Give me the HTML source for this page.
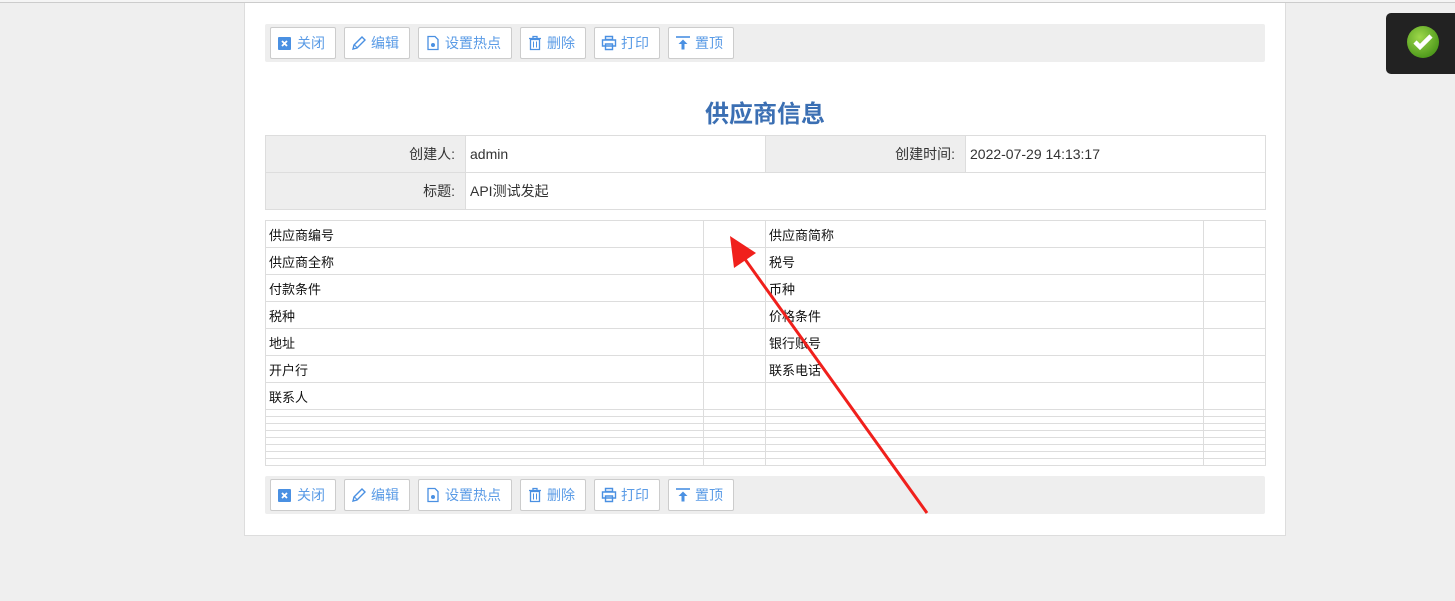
<!DOCTYPE html>
<html><head><meta charset="utf-8"><style>
*{margin:0;padding:0;box-sizing:border-box}
body{width:1455px;height:601px;background:#efefef;position:relative;overflow:hidden;font-family:"Liberation Sans","Noto Sans CJK SC",sans-serif}
.topline{position:absolute;left:0;top:0;width:1455px;height:3px;background:#f5f5f5;border-bottom:1px solid #ccc}
.panel{position:absolute;left:244px;top:3px;width:1042px;height:533px;background:#fff;border:1px solid #ddd;border-top:none}
.bar{position:absolute;left:265px;width:1000px;height:38px;background:#eee;border-radius:2px}
.btn{position:absolute;top:3px;height:32px;background:#fff;border:1px solid #ccc;border-radius:2px;color:#5a9be6;font-size:14px;line-height:30px;padding-left:26px}
.btn svg{position:absolute;left:6px;top:7px}
.title{position:absolute;left:244px;width:1042px;top:94px;text-align:center;font-size:24px;font-weight:bold;color:#3b6fb3}
table{border-collapse:collapse;position:absolute;left:265px;table-layout:fixed}
td{border:1px solid #ddd;padding:0 4px}
.info td{height:37px;font-size:14px;color:#333;padding:0 4px}
.info td.l{background:#eee;text-align:right;padding-right:10px}
.det td{font-size:13px;color:#111;height:27px;padding:0 3px}
.det tr.t td{height:7px;padding:0}
.toast{position:absolute;left:1386px;top:13px;width:75px;height:61px;background:#222;border-radius:5px}
</style></head><body>
<div class="topline"></div>
<div class="panel"></div>

<div class="bar" style="top:24px">
 <div class="btn" style="left:5px;width:66px"><svg width="16" height="16"><rect x="1" y="2" width="13" height="13" rx="1" fill="#4a90e2"/><path d="M5 6l5 5M10 6l-5 5" stroke="#fff" stroke-width="1.8"/></svg>关闭</div>
 <div class="btn" style="left:79px;width:66px"><svg width="16" height="16"><path d="M2 14l1-4 8-8 3 3-8 8z" fill="none" stroke="#4a90e2" stroke-width="1.4"/><path d="M3.5 10l2.5 2.5" stroke="#4a90e2"/></svg>编辑</div>
 <div class="btn" style="left:153px;width:94px"><svg width="16" height="16"><path d="M3 1.5h7l3 3v10H3z" fill="none" stroke="#4a90e2" stroke-width="1.3"/><circle cx="8" cy="10" r="2" fill="#4a90e2"/></svg>设置热点</div>
 <div class="btn" style="left:255px;width:66px"><svg width="16" height="16"><path d="M2 3.5h12M6 3.5V1.5h4v2M3.5 4.5h9v10h-9z" fill="none" stroke="#4a90e2" stroke-width="1.3"/><path d="M6.5 6.5v6M9.5 6.5v6" stroke="#4a90e2"/></svg>删除</div>
 <div class="btn" style="left:329px;width:66px"><svg width="16" height="16"><path d="M4.5 1.5h7v3h-7zM1.5 5h13v6h-13zM4.5 9h7v5.5h-7z" fill="#fff" stroke="#4a90e2" stroke-width="1.4"/></svg>打印</div>
 <div class="btn" style="left:403px;width:66px"><svg width="16" height="16"><path d="M1 2h14" stroke="#4a90e2" stroke-width="1.6"/><path d="M8 4.5l-4.5 4.5h3v5.5h3V9h3z" fill="#4a90e2"/></svg>置顶</div>
</div>

<div class="title">供应商信息</div>

<table class="info" style="top:135px;width:1000px">
<col style="width:200px"><col style="width:300px"><col style="width:200px"><col style="width:300px">
<tr><td class="l">创建人:</td><td>admin</td><td class="l">创建时间:</td><td>2022-07-29 14:13:17</td></tr>
<tr><td class="l">标题:</td><td colspan="3">API测试发起</td></tr>
</table>

<table class="det" style="top:220px;width:1000px">
<col style="width:438px"><col style="width:62px"><col style="width:438px"><col style="width:62px">
<tr><td>供应商编号</td><td></td><td>供应商简称</td><td></td></tr>
<tr><td>供应商全称</td><td></td><td>税号</td><td></td></tr>
<tr><td>付款条件</td><td></td><td>币种</td><td></td></tr>
<tr><td>税种</td><td></td><td>价格条件</td><td></td></tr>
<tr><td>地址</td><td></td><td>银行账号</td><td></td></tr>
<tr><td>开户行</td><td></td><td>联系电话</td><td></td></tr>
<tr><td>联系人</td><td></td><td></td><td></td></tr>
<tr class="t"><td></td><td></td><td></td><td></td></tr>
<tr class="t"><td></td><td></td><td></td><td></td></tr>
<tr class="t"><td></td><td></td><td></td><td></td></tr>
<tr class="t"><td></td><td></td><td></td><td></td></tr>
<tr class="t"><td></td><td></td><td></td><td></td></tr>
<tr class="t"><td></td><td></td><td></td><td></td></tr>
<tr class="t"><td></td><td></td><td></td><td></td></tr>
<tr class="t"><td></td><td></td><td></td><td></td></tr>
</table>

<div class="bar" style="top:476px">
 <div class="btn" style="left:5px;width:66px"><svg width="16" height="16"><rect x="1" y="2" width="13" height="13" rx="1" fill="#4a90e2"/><path d="M5 6l5 5M10 6l-5 5" stroke="#fff" stroke-width="1.8"/></svg>关闭</div>
 <div class="btn" style="left:79px;width:66px"><svg width="16" height="16"><path d="M2 14l1-4 8-8 3 3-8 8z" fill="none" stroke="#4a90e2" stroke-width="1.4"/><path d="M3.5 10l2.5 2.5" stroke="#4a90e2"/></svg>编辑</div>
 <div class="btn" style="left:153px;width:94px"><svg width="16" height="16"><path d="M3 1.5h7l3 3v10H3z" fill="none" stroke="#4a90e2" stroke-width="1.3"/><circle cx="8" cy="10" r="2" fill="#4a90e2"/></svg>设置热点</div>
 <div class="btn" style="left:255px;width:66px"><svg width="16" height="16"><path d="M2 3.5h12M6 3.5V1.5h4v2M3.5 4.5h9v10h-9z" fill="none" stroke="#4a90e2" stroke-width="1.3"/><path d="M6.5 6.5v6M9.5 6.5v6" stroke="#4a90e2"/></svg>删除</div>
 <div class="btn" style="left:329px;width:66px"><svg width="16" height="16"><path d="M4.5 1.5h7v3h-7zM1.5 5h13v6h-13zM4.5 9h7v5.5h-7z" fill="#fff" stroke="#4a90e2" stroke-width="1.4"/></svg>打印</div>
 <div class="btn" style="left:403px;width:66px"><svg width="16" height="16"><path d="M1 2h14" stroke="#4a90e2" stroke-width="1.6"/><path d="M8 4.5l-4.5 4.5h3v5.5h3V9h3z" fill="#4a90e2"/></svg>置顶</div>
</div>

<svg style="position:absolute;left:0;top:0" width="1455" height="601">
 <path d="M927 513L742 255" stroke="#f0201c" stroke-width="3"/>
 <path d="M730 236L734 268L756 253z" fill="#f0201c"/>
</svg>

<div class="toast">
 <svg style="position:absolute;left:20px;top:12px" width="34" height="34"><defs><radialGradient id="g" cx="40%" cy="35%" r="65%"><stop offset="0" stop-color="#9ed84a"/><stop offset="1" stop-color="#4f9a1c"/></radialGradient></defs><circle cx="17" cy="17" r="16" fill="url(#g)"/><path d="M9 17l5 5 11-11" fill="none" stroke="#fff" stroke-width="4.5"/></svg>
</div>
</body></html>
